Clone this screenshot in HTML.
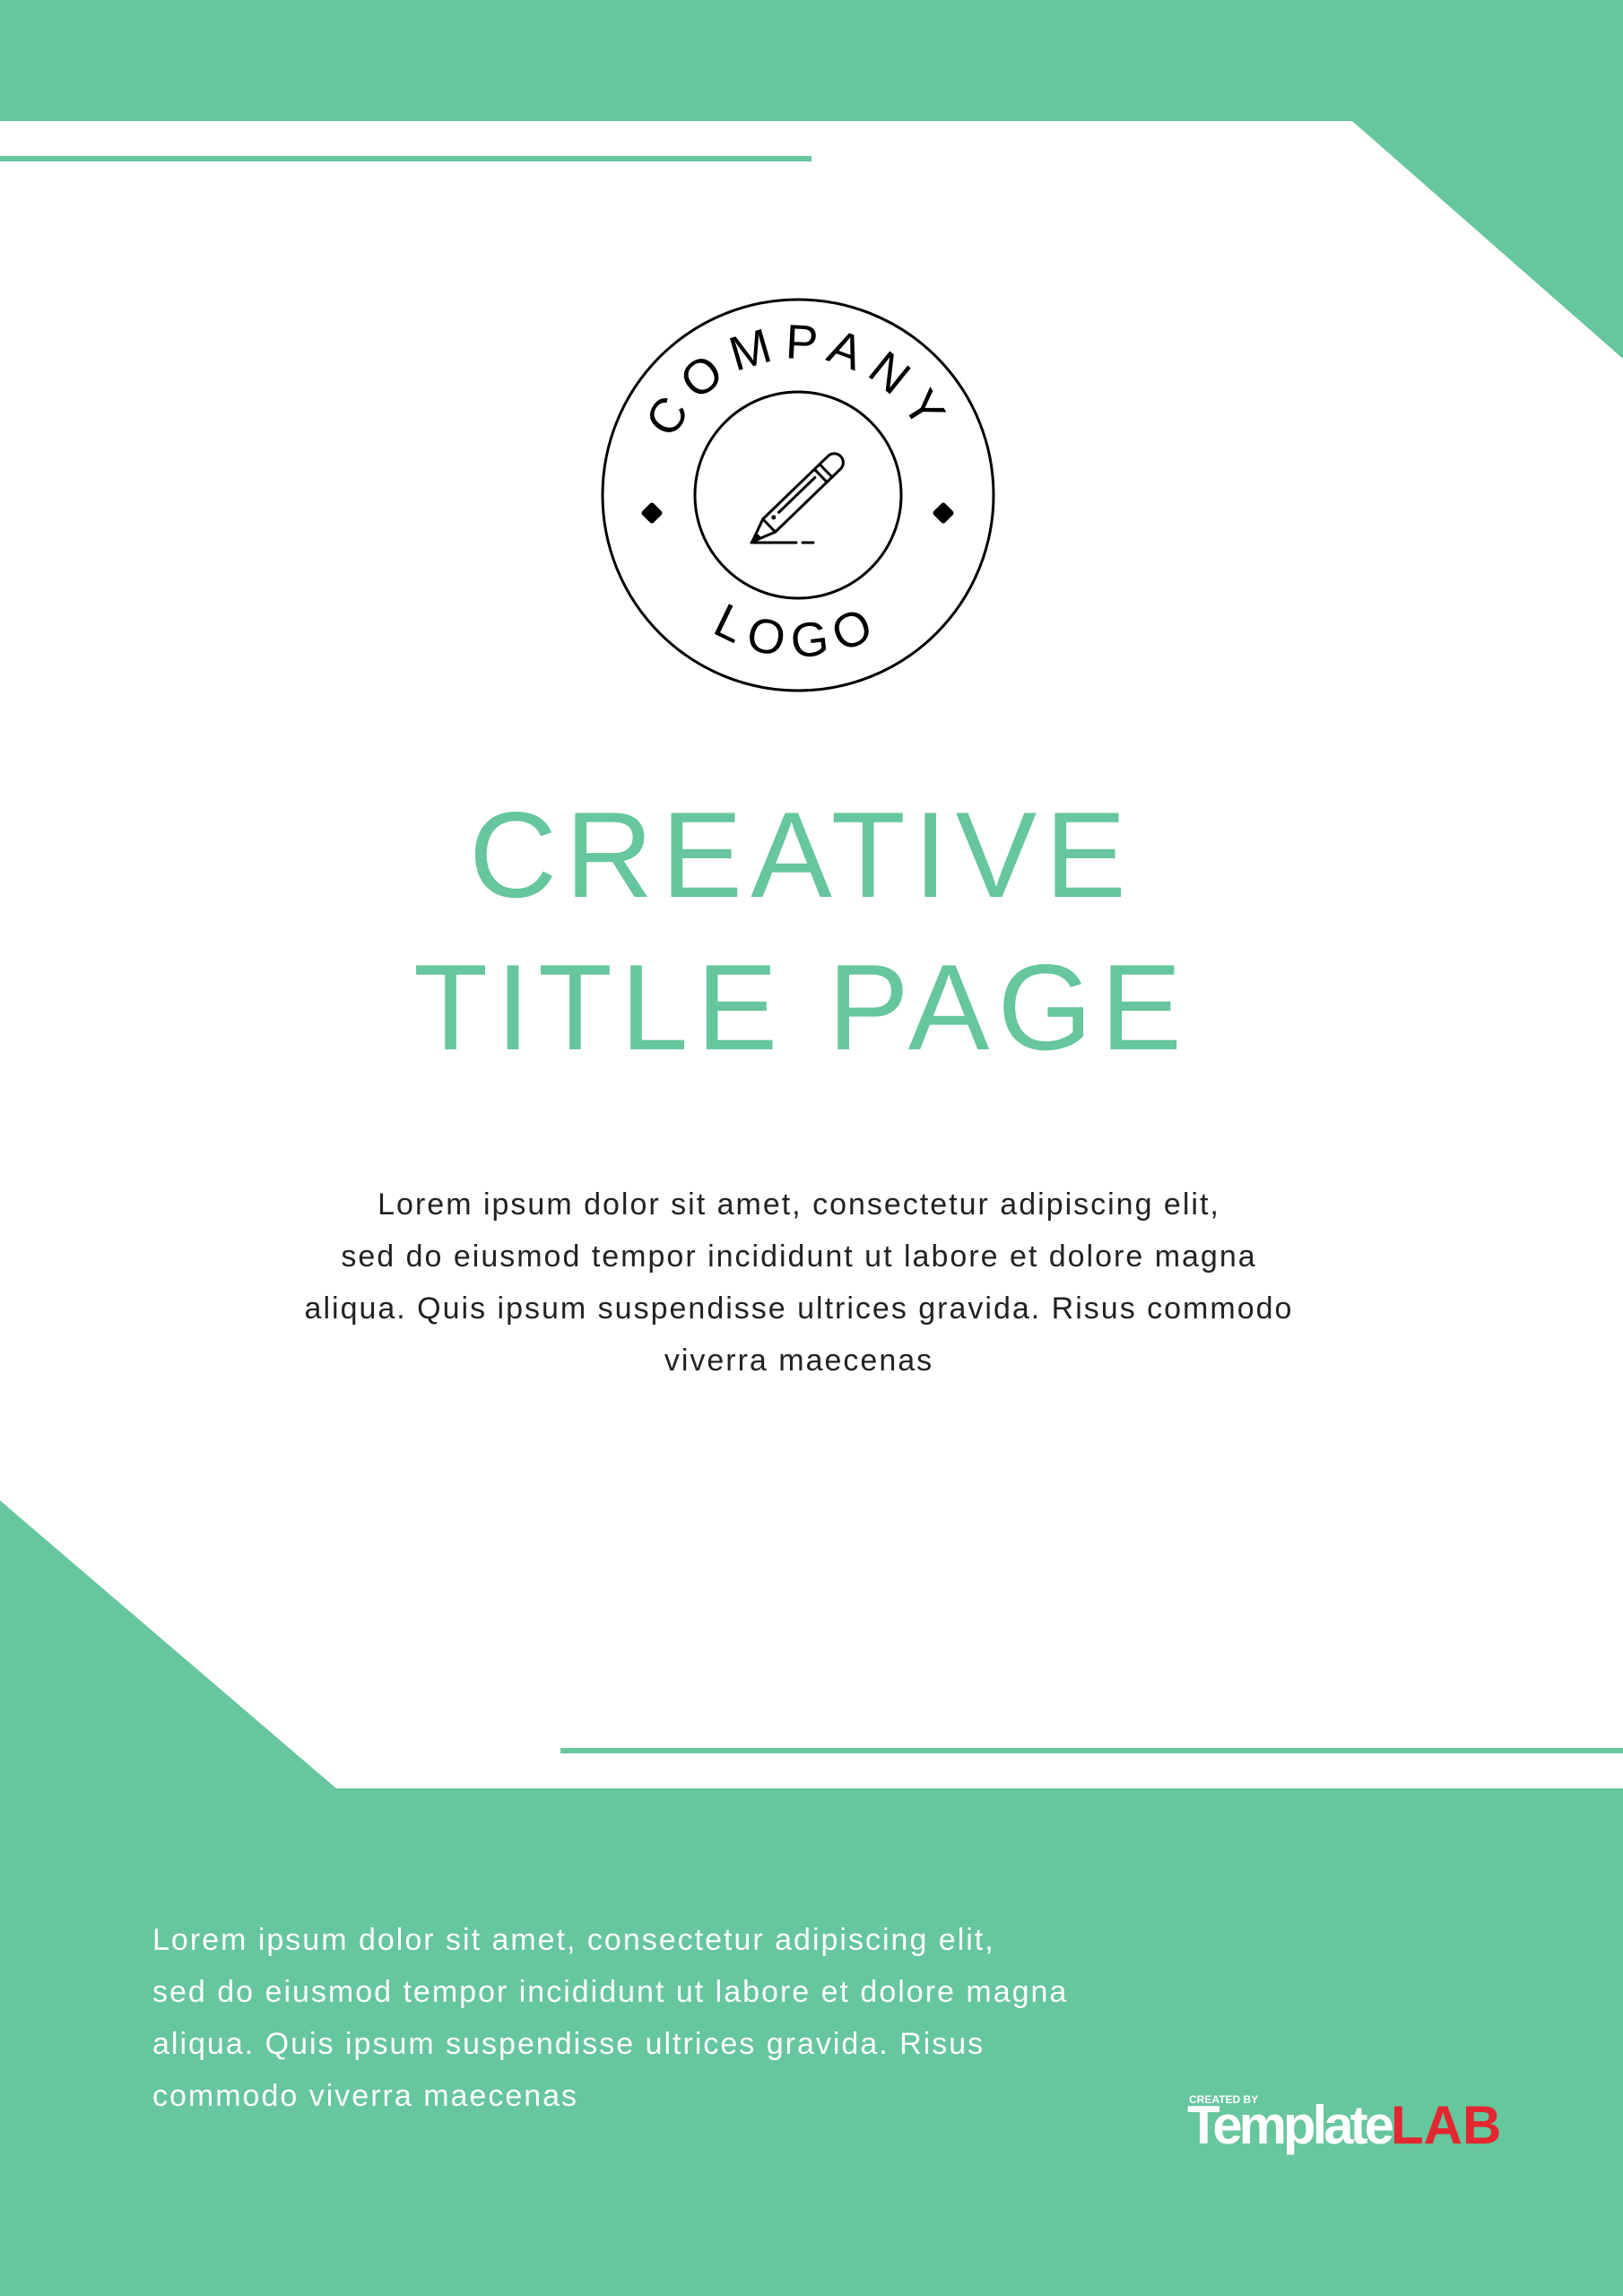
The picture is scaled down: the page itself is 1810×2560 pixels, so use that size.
<!DOCTYPE html>
<html><head><meta charset="utf-8"><style>
html,body{margin:0;padding:0}
body{width:1810px;height:2560px;position:relative;overflow:hidden;background:#fff;font-family:"Liberation Sans",Arial,sans-serif}
.abs{position:absolute}
.title{left:0;width:1788px;text-align:center;color:#66c69d;font-size:136px;line-height:1;white-space:nowrap;letter-spacing:9px}
.p{left:0;width:1782px;text-align:center;color:#222;font-size:34px;letter-spacing:2px;line-height:58px}
.b{left:170px;color:#fff;font-size:34px;letter-spacing:2px;line-height:58px;white-space:nowrap}
</style></head><body>
<svg class="abs" style="left:0;top:0" width="1810" height="2560">
<polygon points="0,0 1810,0 1810,400 1508,135 0,135" fill="#66c69d"/>
<rect x="0" y="174" width="905" height="6" fill="#66c69d"/>
<polygon points="0,1673 375,1994 1810,1994 1810,2560 0,2560" fill="#66c69d"/>
<rect x="625" y="1949" width="1185" height="6" fill="#66c69d"/>
<g fill="none" stroke="#000" stroke-width="3">
<circle cx="890" cy="552" r="218"/>
<circle cx="890" cy="552" r="115"/>
</g>
<rect x="718" y="563" width="18" height="18" rx="3" fill="#000" transform="rotate(45 727 572)"/>
<rect x="1043" y="563" width="18" height="18" rx="3" fill="#000" transform="rotate(45 1052 572)"/>
<defs>
<path id="top" d="M738,552 A152,152 0 0 1 1042,552"/>
<path id="bot" d="M710,552 A180,180 0 0 0 1070,552"/>
</defs>
<text font-family="Liberation Sans,sans-serif" font-size="54" letter-spacing="12" fill="#000"><textPath href="#top" startOffset="50%" text-anchor="middle">COMPANY</textPath></text>
<text font-family="Liberation Sans,sans-serif" font-size="54" letter-spacing="12" fill="#000"><textPath href="#bot" startOffset="50%" text-anchor="middle">LOGO</textPath></text>
<g transform="translate(839,604) rotate(-44)" fill="none" stroke="#000" stroke-width="3" stroke-linejoin="round" stroke-linecap="round">
<path d="M0,0 L26,-10 L127,-10 A10,10 0 0 1 127,10 L26,10 Z"/>
<path d="M26,-10 L26,10 M106,-10 L106,10 M114,-10 L114,10"/>
<path d="M0,0 L9,-3.5 L9,3.5 Z" fill="#000"/>
<path d="M44,-3 L100,-3"/>
<circle cx="36" cy="-3" r="1" fill="#000"/>
</g>
<path d="M838,605 L888,605 M895,605 L907,605" stroke="#000" stroke-width="3" stroke-linecap="round"/>
</svg>
<div class="abs title" style="top:885px">CREATIVE</div>
<div class="abs title" style="top:1055px">TITLE PAGE</div>
<div class="abs p" style="top:1314px">Lorem ipsum dolor sit amet, consectetur adipiscing elit,<br>sed do eiusmod tempor incididunt ut labore et dolore magna<br>aliqua. Quis ipsum suspendisse ultrices gravida. Risus commodo<br>viverra maecenas</div>
<div class="abs b" style="top:2134px">Lorem ipsum dolor sit amet, consectetur adipiscing elit,<br>sed do eiusmod tempor incididunt ut labore et dolore magna<br>aliqua. Quis ipsum suspendisse ultrices gravida. Risus<br>commodo viverra maecenas</div>
<div class="abs" style="left:1326px;top:2334px;color:#fff;font-size:12px;font-weight:bold">CREATED BY</div>
<div class="abs" style="left:1324px;top:2340px;font-size:60px;font-weight:bold;letter-spacing:-4px;line-height:1;white-space:nowrap"><span style="color:#fff">Template</span><span style="color:#e3262f;letter-spacing:0">LAB</span></div>
</body></html>
